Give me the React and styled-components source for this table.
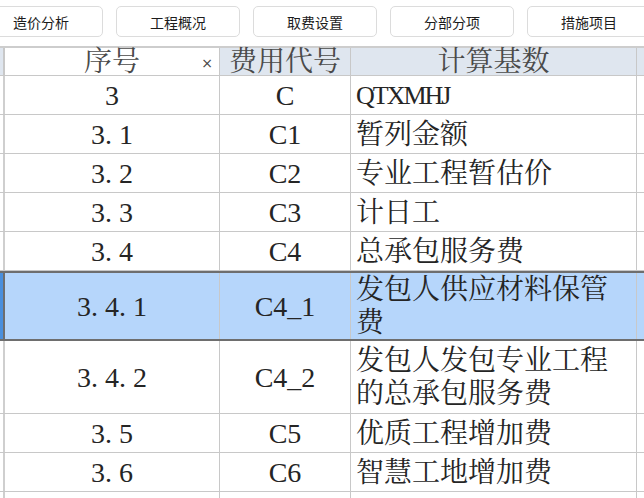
import React from "react";
import styled, { createGlobalStyle } from "styled-components";

const Global = createGlobalStyle`
  html, body { margin: 0; padding: 0; background: #ffffff; }
  body { width: 644px; height: 498px; overflow: hidden; }
`;

const Page = styled.div`
  width: 644px;
  height: 498px;
  overflow: hidden;
  background: #fff;
  display: flex;
  flex-direction: column;
`;

const Toolbar = styled.div`
  display: flex;
  gap: 13px;
  margin-left: -21px;
  padding-top: 6px;
  height: 46px;
  box-sizing: border-box;
  flex: none;
`;

const ToolButton = styled.button`
  flex: none;
  width: 124px;
  height: 31px;
  border: 1px solid #dcdcdc;
  border-radius: 5px;
  background: #fff;
  font-family: "Noto Sans CJK SC", "Noto Sans", sans-serif;
  font-size: 14px;
  color: #1c1c1c;
  padding: 0;
  display: flex;
  align-items: center;
  justify-content: center;
`;

const Table = styled.div`
  border-top: 2px solid #cdcdcd;
  display: flex;
  flex-direction: column;
  font-family: "Liberation Serif", "Noto Serif CJK SC", "Noto Sans CJK SC", serif;
  font-size: 28px;
  color: #252525;
`;

const cols = "5px 215px 131px 286px 7px";

const HeaderRow = styled.div`
  display: grid;
  grid-template-columns: ${cols};
  height: 28px;
  border-bottom: 1px solid #c8c8c8;
  box-sizing: border-box;
`;

const HeadCell = styled.div`
  position: relative;
  background: ${(p) => (p.$tinted ? "#dfe6ef" : "#ffffff")};
  border-right: ${(p) => (p.$edge ? "2px" : "1px")} solid #c8c8c8;
  display: flex;
  align-items: center;
  justify-content: center;
  color: #4a4a4a;
  line-height: 27px;
  white-space: nowrap;
  &:last-child { border-right: none; }
`;

const CloseMark = styled.span`
  position: absolute;
  right: 6px;
  top: 8px;
  font-family: "DejaVu Sans", sans-serif;
  font-size: 14px;
  color: #444;
  line-height: 1;
`;

const Row = styled.div`
  display: grid;
  grid-template-columns: ${cols};
  min-height: ${(p) => p.$h}px;
  box-sizing: content-box;
  background: ${(p) => (p.$selected ? "#b6d6fb" : "#fff")};
  border-top: ${(p) => (p.$selected ? "2px solid #6e6e6e" : "none")};
  border-bottom: ${(p) => (p.$selected ? "2px solid #6e6e6e" : "1px solid #c8c8c8")};
`;

const EdgeCell = styled.div`
  background: ${(p) => (p.$selected ? "#4a8fdc" : "#fff")};
  border-right: 2px solid ${(p) => (p.$selected ? "#6e6e6e" : "#cfcfcf")};
`;

const Cell = styled.div`
  display: flex;
  align-items: center;
  justify-content: ${(p) => (p.$left ? "flex-start" : "center")};
  padding: ${(p) => (p.$left ? "0 22px 0 5px" : "0")};
  border-right: 1px solid #c8c8c8;
  line-height: 33px;
  overflow: hidden;
`;

const TailCell = styled.div`
  background: ${(p) => (p.$selected ? "#b6d6fb" : "#fff")};
`;

const Dot = styled.span`
  display: inline-block;
  width: 0.5em;
  text-align: left;
`;

const Compact = styled.span`
  font-size: 26px;
  letter-spacing: -2px;
`;

const buttons = ["造价分析", "工程概况", "取费设置", "分部分项", "措施项目"];

const rows = [
  { seq: "3", code: "C", base: "QTXMHJ", latin: true },
  { seq: "3.1", code: "C1", base: "暂列金额" },
  { seq: "3.2", code: "C2", base: "专业工程暂估价" },
  { seq: "3.3", code: "C3", base: "计日工" },
  { seq: "3.4", code: "C4", base: "总承包服务费" },
  { seq: "3.4.1", code: "C4_1", base: "发包人供应材料保管费", h: 66, selected: true },
  { seq: "3.4.2", code: "C4_2", base: "发包人发包专业工程的总承包服务费", h: 72 },
  { seq: "3.5", code: "C5", base: "优质工程增加费" },
  { seq: "3.6", code: "C6", base: "智慧工地增加费" },
  { seq: "", code: "", base: "" },
];

function Seq({ value }) {
  const parts = value.split(".");
  return (
    <span>
      {parts.map((p, i) => (
        <React.Fragment key={i}>
          {p}
          {i < parts.length - 1 && <Dot>.</Dot>}
        </React.Fragment>
      ))}
    </span>
  );
}

export default function App() {
  return (
    <Page>
      <Global />
      <Toolbar>
        {buttons.map((b) => (
          <ToolButton key={b}>{b}</ToolButton>
        ))}
      </Toolbar>
      <Table>
        <HeaderRow>
          <HeadCell $tinted $edge />
          <HeadCell>
            序号
            <CloseMark>×</CloseMark>
          </HeadCell>
          <HeadCell $tinted>费用代号</HeadCell>
          <HeadCell $tinted>计算基数</HeadCell>
          <HeadCell $tinted />
        </HeaderRow>
        {rows.map((r, i) => (
          <Row key={i} $h={r.h || 38} $selected={r.selected}>
            <EdgeCell $selected={r.selected} />
            <Cell>
              <Seq value={r.seq} />
            </Cell>
            <Cell>{r.code}</Cell>
            <Cell $left>{r.latin ? <Compact>{r.base}</Compact> : r.base}</Cell>
            <TailCell $selected={r.selected} />
          </Row>
        ))}
      </Table>
    </Page>
  );
}
